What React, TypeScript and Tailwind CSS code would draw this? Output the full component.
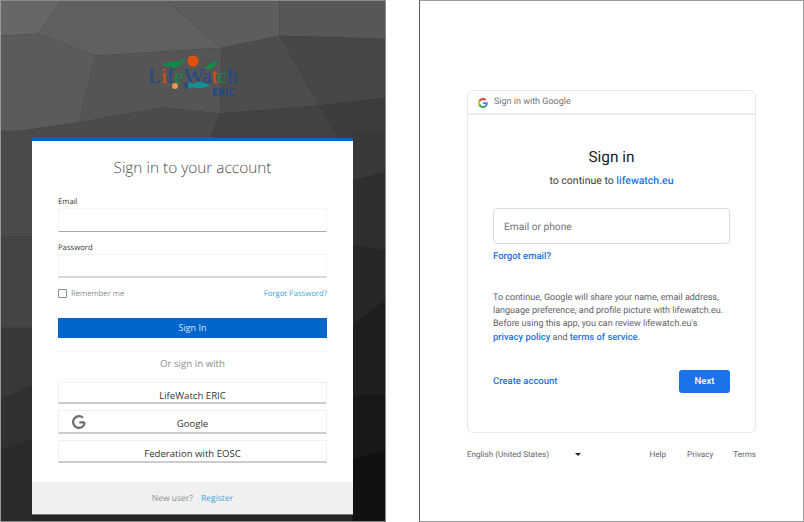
const polys: [string, string][] = [
  ["0,0 60,0 37,33 0,35", "#676767"],
  ["60,0 167,0 222,47 95,55 37,33", "#606060"],
  ["167,0 280,0 280,35 222,47", "#5d5d5d"],
  ["280,0 386,0 386,38 280,35", "#575757"],
  ["0,35 37,33 95,55 78,122 0,133", "#5b5b5b"],
  ["95,55 222,47 220,113 162,107 78,122", "#555555"],
  ["222,47 280,35 320,105 220,113", "#4d4d4d"],
  ["280,35 386,38 386,97 320,105", "#474747"],
  ["0,133 78,122 162,107 220,113 210,140 0,140", "#4b4b4b"],
  ["220,113 320,105 340,140 210,140", "#424242"],
  ["320,105 386,97 386,140 340,140", "#3c3c3c"],
  ["0,130 32,130 32,236 0,236", "#4a4a4a"],
  ["0,236 32,236 32,328 0,328", "#444444"],
  ["0,328 32,328 32,385 0,400", "#383838"],
  ["0,400 32,385 32,440 0,450", "#303030"],
  ["0,450 32,440 32,522 0,522", "#2a2a2a"],
  ["353,130 386,130 386,172 353,180", "#393939"],
  ["353,180 386,172 386,250 353,245", "#2e2e2e"],
  ["353,245 386,250 386,300 353,325", "#272727"],
  ["353,325 386,300 386,395 353,395", "#1e1e1e"],
  ["353,395 386,395 386,450 353,460", "#181818"],
  ["353,460 386,450 386,522 353,522", "#101010"],
  ["32,514 353,514 353,522 32,522", "#242424"],
];

const LoginButton = ({ label, withIcon, h }: { label: string; withIcon?: boolean; h: string }) => (
  <button className={`relative flex w-full items-end justify-center border border-[#f0f0f0] border-b-2 border-b-[#cccccc] text-[9.6px] leading-[12px] text-[#333] ${h}`}>
    {withIcon && (
      <svg viewBox="0 0 24 24" className="absolute left-[13px] top-[4px] size-[14px]" fill="none" stroke="#6a6e73" strokeWidth="3.8">
        <path d="M21.500 12.500H12.500M21.500 12.500c0 5.500-3.900 9.500-9.500 9.500a10 10 0 1 1 6.800-17.300" />
      </svg>
    )}
    {label}
  </button>
);

const LeftPanel = () => (
  <div className="relative flex h-[522px] w-[386px] shrink-0 border border-[#8a8a8a] border-l-[#999] bg-[#333] pl-[31px] font-['Open_Sans',sans-serif]">
    <svg className="absolute inset-0 size-full blur-[0.6px]" viewBox="0 0 386 522" preserveAspectRatio="none">
      {polys.map(([points, fill], i) => (
        <polygon key={i} points={points} fill={fill} />
      ))}
    </svg>

    <div className="relative flex w-[321px] flex-col pt-[54px]">
      {/* logo */}
      <svg viewBox="0 0 92 44" className="ml-[116px] h-[44px] w-[92px]">
        <circle cx="45" cy="6" r="5.500" fill="#e2500f" />
        <path d="M14 9c6-2 12-3 17-3l6-2c-2 4-5 7-9 8l-3 3-2-4c-3 1-6 0-9-2z" fill="#128a4a" />
        <path d="M57 14c2-4 5-6 8-7l5-1c-2 4-5 7-8 8z" fill="#128a4a" />
        <text x="0" y="28" fontFamily="'Liberation Serif',serif" fontSize="21.400" fill="#1d4a8c">
          L<tspan fill="#e2500f">i</tspan>f<tspan fill="#128a4a">e</tspan>Wa<tspan fill="#e2500f">t</tspan><tspan fill="#128a4a">c</tspan>h
        </text>
        <circle cx="27" cy="31" r="3" fill="#e8994a" />
        <path d="M40 31l1-5 3 3c4-2 9-3 13-1 2 1 4 2 5 3-6 2-12 3-17 1l-4 2z" fill="#12909a" />
        <path d="M36 27l2 9 2-7z" fill="#1d4a8c" />
        <text x="64" y="41" fontFamily="'Open Sans',sans-serif" fontWeight="700" fontSize="10.500" fill="#1d4a8c">ERIC</text>
      </svg>

      <div className="mt-[38.500px] flex flex-col border-t-[3px] border-[#0066cc] bg-white">
        <h1 className="mt-[16px] text-center text-[15.4px] leading-[22px] font-light text-[#4d4d4d]">Sign in to your account</h1>

        <div className="mt-[17px] flex flex-col px-[26px]">
          <label className="text-[7.700px] leading-[12px] text-[#333]">Email</label>
          <div className="h-[24px] border border-[#f5f5f5] border-b-[#a8a8a8]" />
          <label className="mt-[10px] text-[7.700px] leading-[12px] text-[#333]">Password</label>
          <div className="h-[24px] border border-[#f5f5f5] border-b-2 border-b-[#d8d8d8]" />

          <div className="mt-[10px] flex items-center justify-between text-[7.700px] leading-[12px]">
            <span className="flex items-center gap-[4px] text-[#8a8d90]">
              <span className="size-[9px] rounded-[1px] border border-[#8a8d90]" />
              Remember me
            </span>
            <a className="text-[#39a5dc]">Forgot Password?</a>
          </div>

          <button className="mt-[18px] h-[20px] w-full pt-[1px] bg-[#0066cc] text-[9px] text-[#d7e6f5]">Sign In</button>

          <div className="mt-[13px] border-t border-[#f5f5f5]" />
          <p className="mt-[5px] text-center text-[9.7px] leading-[14px] text-[#8a8d90]">Or sign in with</p>

          <div className="mt-[11px] flex flex-col gap-[6px]">
            <LoginButton label="LifeWatch ERIC" h="h-[22px]" />
            <LoginButton label="Google" withIcon h="h-[24px] pb-[2px]" />
            <LoginButton label="Federation with EOSC" h="h-[23px] pb-[1px]" />
          </div>
        </div>

        <div className="mt-[19px] flex h-[33px] items-center justify-center gap-2 border-b border-[#777] bg-[#f0f0f0] pt-[3px] text-[8.500px]">
          <span className="text-[#8a8d90]">New user?</span>
          <a className="text-[#39a5dc]">Register</a>
        </div>
      </div>
    </div>
  </div>
);

const GoogleG = () => (
  <svg viewBox="0 0 48 48" className="size-[10px]">
    <path fill="#EA4335" d="M24 9.500c3.500 0 6.700 1.200 9.200 3.600l6.900-6.900C35.900 2.400 30.500 0 24 0 14.600 0 6.500 5.400 2.600 13.200l8 6.200C12.500 13.700 17.800 9.500 24 9.500z" />
    <path fill="#4285F4" d="M47 24.500c0-1.600-.1-3.100-.4-4.500H24v9h12.900c-.6 3-2.300 5.500-4.800 7.200l7.700 6C44.400 37.900 47 31.800 47 24.500z" />
    <path fill="#FBBC05" d="M10.500 28.600c-.5-1.400-.8-3-.8-4.600s.3-3.200.8-4.600l-8-6.200C.9 16.500 0 20.100 0 24s.9 7.500 2.600 10.800l7.900-6.200z" />
    <path fill="#34A853" d="M24 48c6.500 0 11.900-2.100 15.900-5.800l-7.700-6c-2.200 1.400-4.900 2.300-8.200 2.300-6.200 0-11.500-4.200-13.400-9.900l-8 6.200C6.500 42.600 14.600 48 24 48z" />
  </svg>
);

const RightPanel = () => (
  <div className="flex h-[522px] w-[385px] shrink-0 flex-col items-center border border-[#9a9a9a] border-l-[#5f5f5f] bg-white font-['Roboto',sans-serif]">
    <div className="mt-[89px] flex h-[343px] w-[289px] flex-col rounded-[6px] border border-[#e8e8e8]">
      <div className="flex h-[24px] shrink-0 items-center gap-[6px] border-b-2 border-[#eeeeee] pt-[2px] pl-[10px] text-[9px] text-[#70757a]">
        <GoogleG />
        Sign in with Google
      </div>
      <div className="flex flex-1 flex-col px-[25px]">
        <h2 className="mt-[31px] text-center text-[15.400px] leading-[22px] text-[#202124]">Sign in</h2>
        <p className="mt-[6px] text-center text-[10.500px] leading-[14px] text-[#3c4043]">
          to continue to <span className="font-medium text-[#1a73e8]">lifewatch.eu</span>
        </p>
        <div className="mt-[20px] flex h-[36px] shrink-0 items-center rounded-[4px] border border-[#dadce0] pt-[3px] pl-[10px] text-[10.200px] text-[#70757a]">Email or phone</div>
        <a className="mt-[6px] text-[9.500px] leading-[13px] font-medium text-[#1a73e8]">Forgot email?</a>
        <p className="mt-[29px] text-[9px] leading-[13px] whitespace-nowrap text-[#5f6368]">
          To continue, Google will share your name, email address,
          <br />
          language preference, and profile picture with lifewatch.eu.
          <br />
          Before using this app, you can review lifewatch.eu's
          <br />
          <span className="text-[9.400px] font-medium text-[#1a73e8]">privacy policy</span> and <span className="text-[9.400px] font-medium text-[#1a73e8]">terms of service</span>.
        </p>
        <div className="mt-[25px] flex items-center justify-between">
          <a className="mt-[1px] text-[9.500px] font-medium text-[#1a73e8]">Create account</a>
          <button className="h-[23px] w-[51px] rounded-[3px] bg-[#1a73e8] text-[9.500px] font-medium text-white">Next</button>
        </div>
      </div>
    </div>
    <div className="mt-[15px] flex w-[289px] items-center text-[8.100px] text-[#5f6368]">
      <span className="w-[108px]">English (United States)</span>
      <span className="border-x-[3px] border-t-[3px] border-x-transparent border-t-[#202124]" />
      <span className="ml-auto">Help</span>
      <span className="ml-[21px]">Privacy</span>
      <span className="ml-[20px]">Terms</span>
    </div>
  </div>
);

export default function App() {
  return (
    <div className="flex h-[522px] w-[804px] justify-between overflow-hidden bg-white [text-rendering:geometricPrecision]">
      <LeftPanel />
      <RightPanel />
    </div>
  );
}
